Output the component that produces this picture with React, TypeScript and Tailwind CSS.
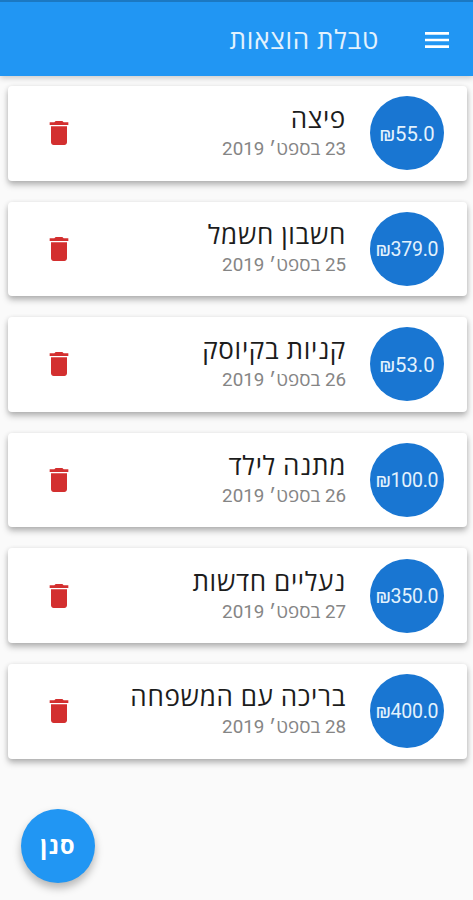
import clsx from 'clsx'
import { MdDelete, MdMenu } from 'react-icons/md'

type Expense = {
  id: number
  title: string
  date: string
  amount: string
}

const EXPENSES: Expense[] = [
  { id: 1, title: 'פיצה', date: '23 בספט׳ 2019', amount: '55.0' },
  { id: 2, title: 'חשבון חשמל', date: '25 בספט׳ 2019', amount: '379.0' },
  { id: 3, title: 'קניות בקיוסק', date: '26 בספט׳ 2019', amount: '53.0' },
  { id: 4, title: 'מתנה לילד', date: '26 בספט׳ 2019', amount: '100.0' },
  { id: 5, title: 'נעליים חדשות', date: '27 בספט׳ 2019', amount: '350.0' },
  { id: 6, title: 'בריכה עם המשפחה', date: '28 בספט׳ 2019', amount: '400.0' },
]

function ExpenseCard({ expense }: { expense: Expense }) {
  return (
    <li className="flex h-[94.6px] items-center rounded-[4px] bg-white pr-[23px] pl-[35px] shadow-[0_4px_6px_rgba(0,0,0,0.25),0_1px_5px_rgba(0,0,0,0.1)]">
      {/* Longer amounts are tightened to stay inside the circle */}
      <div
        dir="ltr"
        className={clsx(
          'flex size-[74px] shrink-0 items-center justify-center rounded-full bg-[#1976d2] pt-px whitespace-nowrap text-[#e3f2fd]',
          expense.amount.length > 4 ? 'text-[19.5px] tracking-[-0.25px]' : 'text-[20.3px]'
        )}
      >
        ₪{expense.amount}
      </div>
      <div className="mr-6 flex-1 pb-[2px]">
        <h2 className="text-[26px] leading-[34px] tracking-[0.7px] text-[#1c1c1c]">{expense.title}</h2>
        <p className="text-[18.8px] leading-[26px] text-[#858585]">{expense.date}</p>
      </div>
      <button aria-label="מחיקה" className="flex w-[32px] justify-center text-[#d32f2f]">
        <MdDelete className="size-8 shrink-0" />
      </button>
    </li>
  )
}

export default function App() {
  return (
    <div
      dir="rtl"
      className="relative h-[900px] w-full overflow-hidden bg-[#fafafa] font-[Roboto,'Open_Sans','Noto_Sans',sans-serif]"
    >
      <header className="flex h-[76px] items-center border-t-2 border-[#1b78c2] bg-[#2196f3] pt-px pr-5 text-white shadow-[0_2px_6px_rgba(0,0,0,0.2)]">
        <button aria-label="תפריט">
          <MdMenu className="size-8" />
        </button>
        <h1 className="mr-[42px] pt-px text-[26px] tracking-[0.75px] text-[#e3f2fd]">טבלת הוצאות</h1>
      </header>

      <ul className="flex flex-col gap-[21px] pt-[10px] pr-[6px] pl-2">
        {EXPENSES.map(expense => (
          <ExpenseCard key={expense.id} expense={expense} />
        ))}
      </ul>

      {/* Floating filter button */}
      <button className="absolute bottom-[17px] left-[21px] flex size-[74px] items-center justify-center rounded-full bg-[#2196f3] pt-[2px] text-[23.5px] font-bold tracking-[1.4px] text-white shadow-[0_5px_8px_rgba(0,0,0,0.28)]">
        סנן
      </button>
    </div>
  )
}
